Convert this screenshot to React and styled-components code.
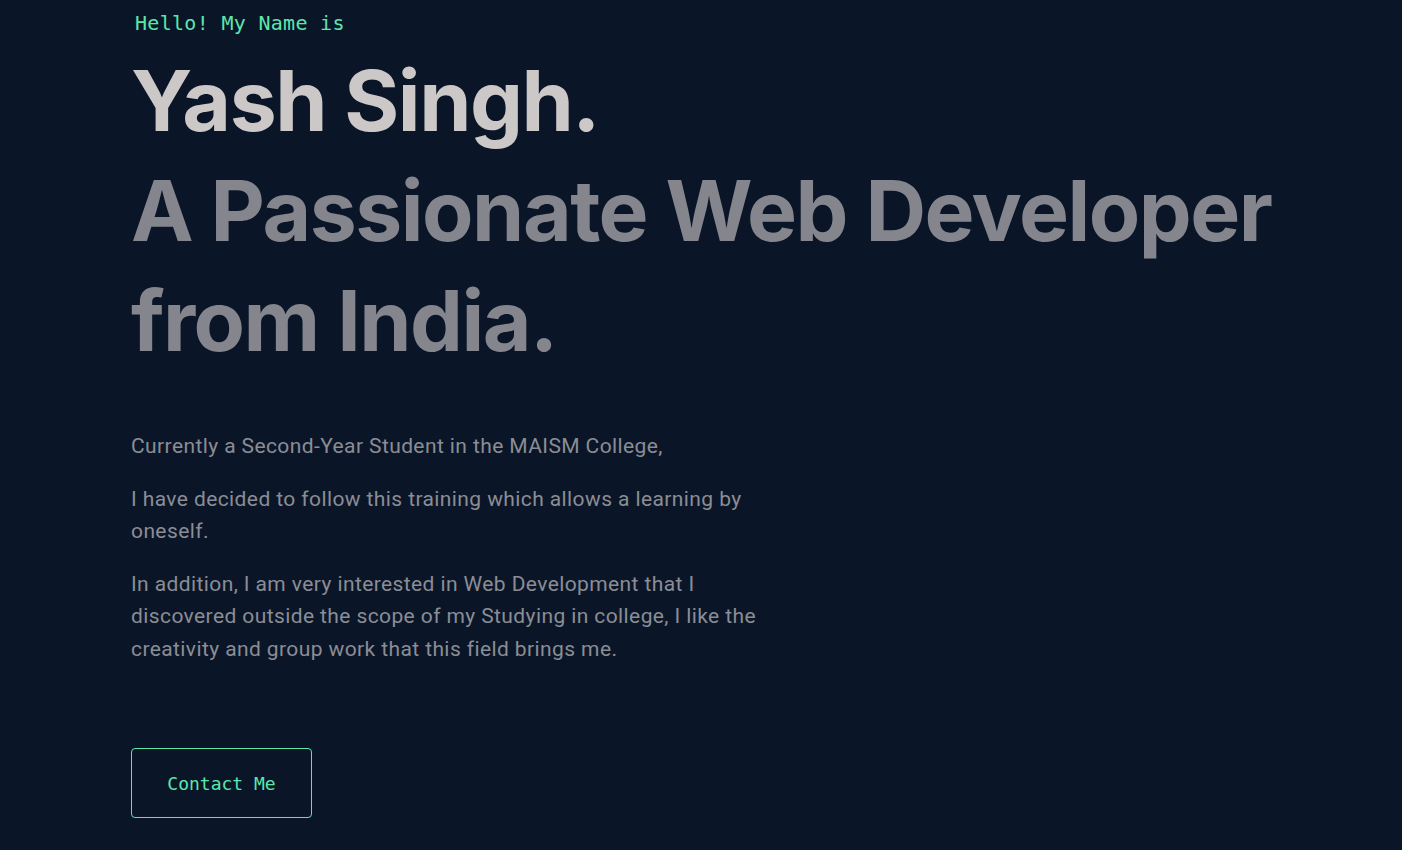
import React from "react";
import styled, { createGlobalStyle } from "styled-components";

const Global = createGlobalStyle`
  html, body { margin: 0; padding: 0; background: #0a1628; }
  body { font-family: "Inter", "Liberation Sans", sans-serif; }
`;

const Page = styled.main`
  min-height: 850px;
  background: #0a1628;
  padding: 10px 0 0 131px;
  box-sizing: border-box;
`;

const Greeting = styled.p`
  margin: 0 0 10px 4px;
  font-family: "DejaVu Sans Mono", "Liberation Mono", monospace;
  font-size: 20px;
  line-height: 26px;
  letter-spacing: 0.3px;
  color: #5ce6ac;
`;

const Heading = styled.h1`
  margin: 0;
  font-family: "Inter", sans-serif;
  font-weight: 700;
  font-size: 84px;
  line-height: 110px;
  letter-spacing: -1.5px;
  color: ${(p) => p.$color};
`;

const Sub = styled(Heading).attrs({ as: "h2" })`
  max-width: 1180px;
`;

const About = styled.div`
  margin-top: 54px;
  max-width: 640px;
  display: flex;
  flex-direction: column;
  gap: 20px;
`;

const Para = styled.p`
  margin: 0;
  font-family: "Roboto", "Inter", sans-serif;
  font-size: 21px;
  line-height: 32.5px;
  letter-spacing: 0.4px;
  color: #8b8d95;
`;

const Button = styled.a`
  margin-top: 83px;
  display: inline-flex;
  align-items: center;
  justify-content: center;
  width: 181px;
  height: 70px;
  box-sizing: border-box;
  border: 1px solid #5ce6ac;
  border-radius: 4px;
  font-family: "DejaVu Sans Mono", "Liberation Mono", monospace;
  font-size: 18px;
  color: #5ce6ac;
  text-decoration: none;
`;

export default function App() {
  return (
    <>
      <Global />
      <Page>
        <Greeting>Hello! My Name is</Greeting>
        <Heading $color="#ccc8c8">Yash Singh.</Heading>
        <Sub $color="#85868d">A Passionate Web Developer from India.</Sub>
        <About>
          <Para>Currently a Second-Year Student in the MAISM College,</Para>
          <Para>I have decided to follow this training which allows a learning by oneself.</Para>
          <Para>
            In addition, I am very interested in Web Development that I discovered outside the scope of my
            Studying in college, I like the creativity and group work that this field brings me.
          </Para>
        </About>
        <Button href="#contact">Contact Me</Button>
      </Page>
    </>
  );
}
